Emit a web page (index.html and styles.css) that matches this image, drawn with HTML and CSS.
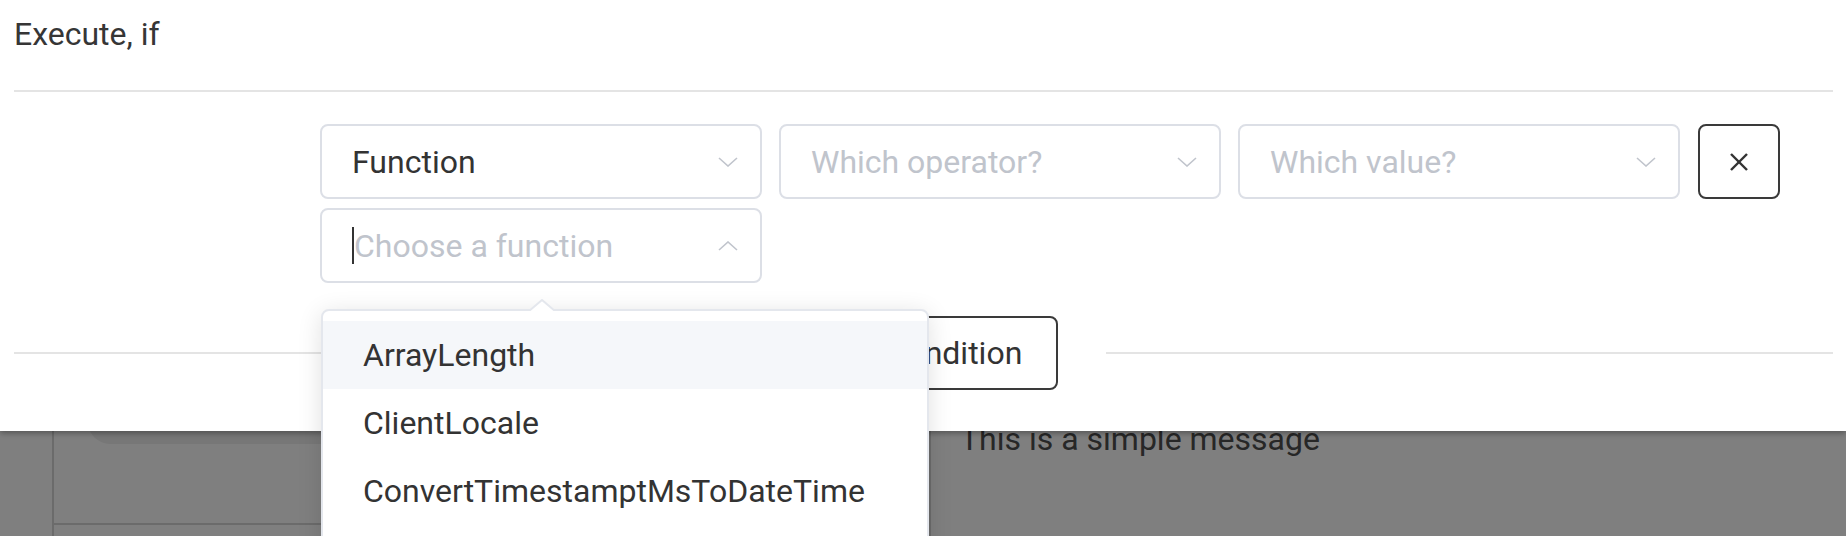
FILE: index.html
```html
<!DOCTYPE html>
<html lang="en">
<head>
<meta charset="utf-8">
<title>Execute, if</title>
<link rel="stylesheet" href="styles.css">
</head>
<body>
<div class="page">
  <div class="page-sidebar"></div>
  <div class="page-left">
    <div class="page-card"></div>
    <div class="page-row"></div>
  </div>
  <div class="page-right">
    <p class="page-message">This is a simple message</p>
  </div>
</div>
<div class="mask"></div>

<section class="drawer">
  <h2 class="drawer-title">Execute, if</h2>
  <div class="conditions">
    <div class="cond-grid">
      <div class="select">
        <span class="select-value">Function</span>
        <svg class="chevron" width="20" height="10" viewBox="0 0 20 10"><polyline points="1,1 10,9 19,1"/></svg>
      </div>
      <div class="select">
        <span class="select-placeholder">Which operator?</span>
        <svg class="chevron" width="20" height="10" viewBox="0 0 20 10"><polyline points="1,1 10,9 19,1"/></svg>
      </div>
      <div class="select">
        <span class="select-placeholder">Which value?</span>
        <svg class="chevron" width="20" height="10" viewBox="0 0 20 10"><polyline points="1,1 10,9 19,1"/></svg>
      </div>
      <button class="remove-btn" type="button" aria-label="Remove">
        <svg width="20" height="20" viewBox="0 0 20 20"><line x1="2" y1="2" x2="18" y2="18"/><line x1="18" y1="2" x2="2" y2="18"/></svg>
      </button>
      <div class="select select-focused">
        <span class="caret"></span>
        <span class="select-placeholder">Choose a function</span>
        <svg class="chevron" width="20" height="10" viewBox="0 0 20 10"><polyline points="1,9 10,1 19,9"/></svg>
      </div>
    </div>
  </div>
  <div class="divider">
    <span class="divider-line"></span>
    <button class="add-btn" type="button">Add condition</button>
    <span class="divider-line"></span>
  </div>
</section>

<div class="dropdown">
  <svg class="dropdown-arrow" width="26" height="12" viewBox="0 0 26 12"><polygon class="arrow-fill" points="0,12 13,0 26,12"/><polyline class="arrow-stroke" points="0,12 13,1 26,12"/></svg>
  <ul class="dropdown-list">
    <li class="dropdown-item is-hover">ArrayLength</li>
    <li class="dropdown-item">ClientLocale</li>
    <li class="dropdown-item">ConvertTimestamptMsToDateTime</li>
  </ul>
</div>
</body>
</html>
```

FILE: styles.css
```css
html, body {
  margin: 0;
  padding: 0;
}

body {
  width: 1846px;
  height: 536px;
  overflow: hidden;
  position: relative;
  background: #ffffff;
  font-family: Roboto, "Liberation Sans", Arial, sans-serif;
  color: #333333;
}

/* underlying page (behind the mask) */
.page {
  display: grid;
  grid-template-columns: 54px 877px 1fr;
  height: 536px;
}

.page-sidebar {
  border-right: 2px solid #d6d6d6;
}

.page-left {
  border-right: 2px solid #d6d6d6;
  display: flex;
  flex-direction: column;
}

.page-card {
  height: 444px;
  margin-left: 34px;
  background: #efefef;
  border-bottom-left-radius: 22px;
}

.page-row {
  height: 79px;
  border-bottom: 2px solid #d6d6d6;
}

.page-right {
  padding: 419px 0 0 29px;
}

.page-message {
  margin: 0;
  font-size: 32px;
  line-height: 40px;
  color: #4e4e4e;
}

.mask {
  position: absolute;
  inset: 0;
  background: rgba(0, 0, 0, 0.5);
}

/* drawer */
.drawer {
  position: absolute;
  top: 0;
  left: 0;
  width: 1846px;
  height: 431px;
  box-sizing: border-box;
  padding: 0 13px 0 14px;
  background: #ffffff;
  box-shadow: 0 2px 6px rgba(0, 0, 0, 0.35);
}

.drawer-title {
  margin: 0;
  padding: 14px 0 36px;
  font-size: 32px;
  line-height: 40px;
  font-weight: 400;
  color: #363636;
  border-bottom: 2px solid #e4e4e4;
}

.conditions {
  padding: 32px 0 0 306px;
}

.cond-grid {
  display: grid;
  grid-template-columns: 442px 442px 442px 83px;
  grid-auto-rows: 75px;
  column-gap: 17px;
  row-gap: 9px;
}

.select {
  box-sizing: border-box;
  display: flex;
  align-items: center;
  padding: 0 22px 0 30px;
  border: 2px solid #dcdfe6;
  border-radius: 8px;
  background: #ffffff;
  font-size: 32px;
  line-height: 40px;
}

.select-value {
  flex: 1;
  color: #333333;
}

.select-placeholder {
  flex: 1;
  color: #c0c4cc;
}

.chevron {
  flex: none;
  fill: none;
  stroke: #c0c4cc;
  stroke-width: 1.6;
}

.caret {
  flex: none;
  width: 2px;
  height: 37px;
  background: #333333;
}

.remove-btn {
  box-sizing: border-box;
  display: flex;
  align-items: center;
  justify-content: center;
  margin-left: 1px;
  padding: 0;
  border: 2px solid #3a3a3a;
  border-radius: 8px;
  background: #ffffff;
}

.remove-btn svg {
  stroke: #333333;
  stroke-width: 2.4;
}

.divider {
  display: flex;
  align-items: center;
  gap: 48px;
  margin-top: 33px;
  height: 74px;
}

.divider-line {
  flex: 1;
  height: 2px;
  background: #e4e4e4;
}

.add-btn {
  box-sizing: border-box;
  height: 74px;
  padding: 0 34px;
  border: 2px solid #3a3a3a;
  border-radius: 8px;
  background: #ffffff;
  font-family: inherit;
  font-size: 32px;
  color: #333333;
}

/* dropdown popper */
.dropdown {
  position: absolute;
  top: 309px;
  left: 321px;
  width: 608px;
  box-sizing: border-box;
  border: 2px solid #e4e7ed;
  border-radius: 8px;
  background: #ffffff;
  box-shadow: 0 4px 24px rgba(0, 0, 0, 0.12);
}

.dropdown-arrow {
  position: absolute;
  top: -12px;
  left: 206px;
  display: block;
}

.arrow-fill {
  fill: #ffffff;
}

.arrow-stroke {
  fill: none;
  stroke: #e4e7ed;
  stroke-width: 2;
}

.dropdown-list {
  list-style: none;
  margin: 0;
  padding: 10px 0 30px;
}

.dropdown-item {
  height: 68px;
  padding: 0 40px;
  font-size: 32px;
  line-height: 68px;
  color: #333333;
  white-space: nowrap;
}

.dropdown-item.is-hover {
  background: #f5f7fa;
}
```
